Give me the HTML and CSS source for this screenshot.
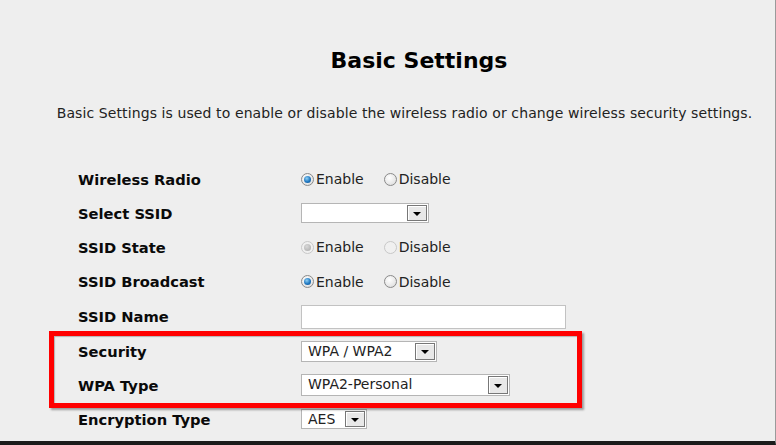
FILE: index.html
```html
<!DOCTYPE html>
<html>
<head>
<meta charset="utf-8">
<link rel="stylesheet" href="styles.css">
</head>
<body>
<div class="page">
  <h1 class="title">Basic Settings</h1>
  <p class="desc">Basic Settings is used to enable or disable the wireless radio or change wireless security settings.</p>
  <div class="form">
    <div class="row">
      <div class="label">Wireless Radio</div>
      <div class="ctrl">
        <span class="opt"><span class="radio on"></span>Enable</span>
        <span class="opt"><span class="radio"></span>Disable</span>
      </div>
    </div>
    <div class="row">
      <div class="label">Select SSID</div>
      <div class="ctrl">
        <span class="select w-ssid"><span class="val"></span><span class="btn"><span class="tri"></span></span></span>
      </div>
    </div>
    <div class="row">
      <div class="label">SSID State</div>
      <div class="ctrl">
        <span class="opt dis"><span class="radio dis on"></span>Enable</span>
        <span class="opt dis"><span class="radio dis"></span>Disable</span>
      </div>
    </div>
    <div class="row tall">
      <div class="label">SSID Broadcast</div>
      <div class="ctrl">
        <span class="opt"><span class="radio on"></span>Enable</span>
        <span class="opt"><span class="radio"></span>Disable</span>
      </div>
    </div>
    <div class="row tall">
      <div class="label">SSID Name</div>
      <div class="ctrl">
        <span class="input"></span>
      </div>
    </div>
    <div class="row">
      <div class="label">Security</div>
      <div class="ctrl">
        <span class="select w-sec"><span class="val">WPA / WPA2</span><span class="btn"><span class="tri"></span></span></span>
      </div>
    </div>
    <div class="row">
      <div class="label">WPA Type</div>
      <div class="ctrl">
        <span class="select w-type"><span class="val">WPA2-Personal</span><span class="btn"><span class="tri"></span></span></span>
      </div>
    </div>
    <div class="row">
      <div class="label">Encryption Type</div>
      <div class="ctrl">
        <span class="select w-enc"><span class="val">AES</span><span class="btn"><span class="tri"></span></span></span>
      </div>
    </div>
  </div>
  <div class="highlight"></div>
</div>
</body>
</html>
```
FILE: styles.css
```css
html, body {
  margin: 0;
  padding: 0;
}
body {
  background: #eeeeee;
  width: 776px;
  height: 445px;
  overflow: hidden;
}
.page {
  position: relative;
  box-sizing: border-box;
  height: 445px;
  border-bottom: 4px solid #1b1b1b;
  border-right: 1px solid #9a9a9a;
  background: #eeeeee;
}
.title {
  margin: 0;
  padding: 47px 0 0 63px;
  text-align: center;
  font-family: "DejaVu Sans", Verdana, sans-serif;
  font-weight: bold;
  font-size: 22px;
  line-height: 28px;
  color: #000;
}
.desc {
  margin: 30px 0 0 0;
  padding-left: 34px;
  text-align: center;
  font-family: "DejaVu Sans", sans-serif;
  font-size: 14px;
  letter-spacing: 0.1px;
  line-height: 16px;
  color: #222;
  white-space: nowrap;
}
.form {
  margin-top: 41px;
  padding-left: 78px;
}
.row {
  display: grid;
  grid-template-columns: 223px 1fr;
  align-items: center;
  height: 34px;
}
.row.tall {
  height: 35px;
}
.label {
  font-family: "DejaVu Sans", Verdana, sans-serif;
  font-weight: bold;
  font-size: 14.7px;
  color: #0a0a0a;
}
.ctrl {
  display: flex;
  align-items: center;
  font-family: "DejaVu Sans", sans-serif;
  font-size: 14px;
  color: #222;
}
.opt {
  display: inline-flex;
  align-items: center;
  margin-right: 20px;
}
.radio {
  box-sizing: border-box;
  width: 13px;
  height: 13px;
  border-radius: 50%;
  border: 1px solid #8a8a8a;
  background: radial-gradient(circle at 40% 35%, #ffffff 0%, #e6e6e6 65%, #cfcfcf 100%);
  margin-right: 2px;
  position: relative;
}
.radio.on::after {
  content: "";
  position: absolute;
  left: 2px;
  top: 2px;
  width: 7px;
  height: 7px;
  border-radius: 50%;
  background: radial-gradient(circle at 40% 35%, #8fd0f5 0%, #1f77c0 55%, #0d4f8c 100%);
}
.radio.dis {
  border-color: #c8c8c8;
  background: #f0f0f0;
}
.radio.dis.on::after {
  background: radial-gradient(circle at 40% 35%, #d8d8d8 0%, #a8a8a8 100%);
}
.select, .input {
  box-sizing: border-box;
  display: inline-flex;
  align-items: stretch;
  background: #ffffff;
  border: 1px solid #b5b5b5;
  height: 21px;
}
.input {
  width: 265px;
  height: 24px;
  border-color: #c2c2c2;
}
.select .val {
  flex: 1;
  padding-left: 6px;
  line-height: 19px;
  font-family: "DejaVu Sans", sans-serif;
  font-size: 14px;
  color: #222;
  white-space: nowrap;
  overflow: hidden;
}
.select .btn {
  box-sizing: border-box;
  width: 20px;
  margin: 1px;
  border: 1px solid #777;
  background: #e8e8e8;
  box-shadow: inset 1px 1px 0 #ffffff;
  display: flex;
  align-items: center;
  justify-content: center;
}
.tri {
  width: 0;
  height: 0;
  border-left: 4px solid transparent;
  border-right: 4px solid transparent;
  border-top: 4px solid #000;
  margin-top: 2px;
}
.w-ssid { width: 128px; height: 20px; }
.w-sec { width: 136px; }
.w-type { width: 209px; height: 22px; }
.w-enc { width: 66px; height: 20px; }
.highlight {
  position: absolute;
  left: 49px;
  top: 331px;
  width: 533px;
  height: 77px;
  box-sizing: border-box;
  border: 5px solid #ff0000;
  box-shadow: 2px 2px 2px rgba(0,0,0,0.35), inset 1px 1px 1px rgba(0,0,0,0.25);
}
```
